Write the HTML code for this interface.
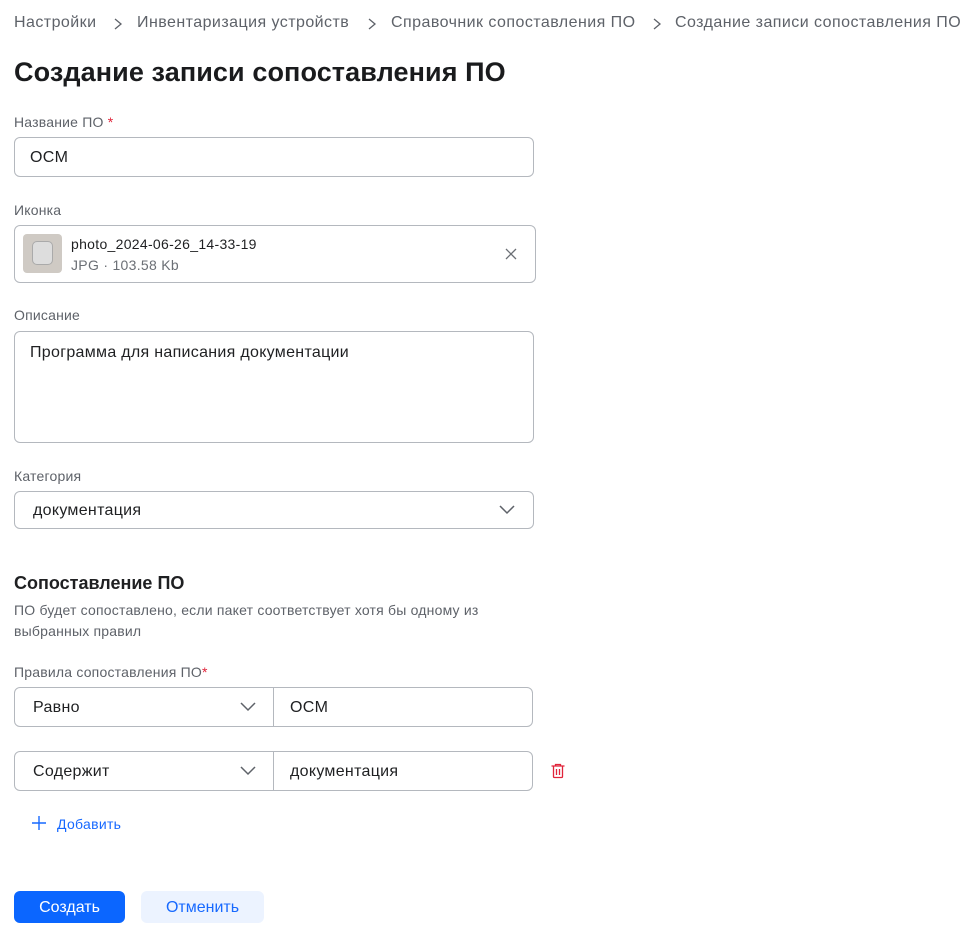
<!DOCTYPE html>
<html><head><meta charset="utf-8"><style>
*{box-sizing:border-box;margin:0;padding:0}
body{width:971px;height:935px;background:#fff;font-family:"Liberation Sans",sans-serif;color:#1f2022;position:relative;overflow:hidden}
.a{position:absolute;white-space:nowrap}
.bc{top:14px;font-size:16px;color:#5e6269;letter-spacing:0.45px}
.lbl{font-size:14px;color:#5e6269;letter-spacing:0.2px}
.box{position:absolute;border:1px solid #b4b8be;border-radius:6px;background:#fff}
.t16{font-size:16px;color:#1f2022;letter-spacing:0.3px}
</style></head><body>
<div class="a bc" style="left:14px">Настройки</div>
<svg class="a" style="left:113px;top:17px" width="10" height="14"><path d="M2 2L8 7L2 12" stroke="#5e6269" stroke-width="1.3" fill="none"/></svg>
<div class="a bc" style="left:137px">Инвентаризация устройств</div>
<svg class="a" style="left:367px;top:17px" width="10" height="14"><path d="M2 2L8 7L2 12" stroke="#5e6269" stroke-width="1.3" fill="none"/></svg>
<div class="a bc" style="left:391px">Справочник сопоставления ПО</div>
<svg class="a" style="left:652px;top:17px" width="10" height="14"><path d="M2 2L8 7L2 12" stroke="#5e6269" stroke-width="1.3" fill="none"/></svg>
<div class="a bc" style="left:675px">Создание записи сопоставления ПО</div>
<div class="a" style="left:14px;top:57px;font-size:27px;font-weight:bold;color:#1a1b1d;letter-spacing:0.1px">Создание записи сопоставления ПО</div>

<div class="a lbl" style="left:14px;top:114px">Название ПО <span style="color:#e0243a">*</span></div>
<div class="box" style="left:14px;top:137px;width:520px;height:40px"></div>
<div class="a t16" style="left:30px;top:149px">OCM</div>

<div class="a lbl" style="left:14px;top:202px">Иконка</div>
<div class="box" style="left:14px;top:225px;width:522px;height:58px"></div>
<div class="a" style="left:23px;top:234px;width:39px;height:39px;border-radius:4px;background:#cfcac4"><div style="margin:7px 9px;width:21px;height:24px;border:1px solid #aaa;border-radius:5px;background:#ddd"></div></div>
<div class="a" style="left:71px;top:236px;font-size:14px;letter-spacing:0.3px">photo_2024-06-26_14-33-19</div>
<div class="a" style="left:71px;top:257px;font-size:14px;color:#6b6f75;letter-spacing:0.3px">JPG · 103.58 Kb</div>
<svg class="a" style="left:504px;top:247px" width="14" height="14"><path d="M2 2L12 12M12 2L2 12" stroke="#6b6f75" stroke-width="1.3"/></svg>

<div class="a lbl" style="left:14px;top:307px">Описание</div>
<div class="box" style="left:14px;top:331px;width:520px;height:112px"></div>
<div class="a t16" style="left:30px;top:344px">Программа для написания документации</div>

<div class="a lbl" style="left:14px;top:468px">Категория</div>
<div class="box" style="left:14px;top:491px;width:520px;height:38px"></div>
<div class="a t16" style="left:33px;top:502px">документация</div>
<svg class="a" style="left:498px;top:503px" width="18" height="12"><path d="M2 3L9 10L16 3" stroke="#5e6269" stroke-width="1.5" fill="none"/></svg>

<div class="a" style="left:14px;top:573px;font-size:18px;font-weight:bold">Сопоставление ПО</div>
<div class="a lbl" style="left:14px;top:602px">ПО будет сопоставлено, если пакет соответствует хотя бы одному из</div>
<div class="a lbl" style="left:14px;top:623px">выбранных правил</div>

<div class="a lbl" style="left:14px;top:664px">Правила сопоставления ПО<span style="color:#e0243a">*</span></div>
<div class="box" style="left:14px;top:687px;width:519px;height:40px"></div>
<div class="a" style="left:273px;top:688px;width:1px;height:38px;background:#b4b8be"></div>
<div class="a t16" style="left:33px;top:699px">Равно</div>
<svg class="a" style="left:239px;top:700px" width="18" height="12"><path d="M2 3L9 10L16 3" stroke="#5e6269" stroke-width="1.5" fill="none"/></svg>
<div class="a t16" style="left:290px;top:699px">OCM</div>

<div class="box" style="left:14px;top:751px;width:519px;height:40px"></div>
<div class="a" style="left:273px;top:752px;width:1px;height:38px;background:#b4b8be"></div>
<div class="a t16" style="left:33px;top:763px">Содержит</div>
<svg class="a" style="left:239px;top:764px" width="18" height="12"><path d="M2 3L9 10L16 3" stroke="#5e6269" stroke-width="1.5" fill="none"/></svg>
<div class="a t16" style="left:290px;top:763px">документация</div>
<svg class="a" style="left:550px;top:763px" width="16" height="16"><path d="M1.5 3H14.5M3.5 3V13.5Q3.5 14.5 4.5 14.5H11.5Q12.5 14.5 12.5 13.5V3M6.5 6V12M9.5 6V12M5.5 3V1.5H10.5V3" stroke="#e0243a" stroke-width="1.3" fill="none"/></svg>

<svg class="a" style="left:32px;top:816px" width="14" height="14"><path d="M7 0V14M0 7H14" stroke="#1769ff" stroke-width="1.4"/></svg>
<div class="a" style="left:57px;top:816px;font-size:14px;color:#1769ff;letter-spacing:0.3px">Добавить</div>

<div class="a" style="left:14px;top:891px;width:111px;height:32px;border-radius:6px;background:#0b66ff;color:#fff;font-size:16px;text-align:center;line-height:33px">Создать</div>
<div class="a" style="left:141px;top:891px;width:123px;height:32px;border-radius:6px;background:#ecf3ff;color:#1769ff;font-size:16px;text-align:center;line-height:33px">Отменить</div>
</body></html>
